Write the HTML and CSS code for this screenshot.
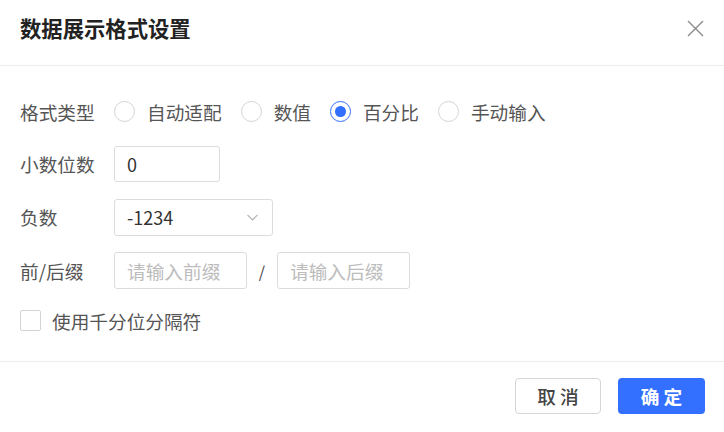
FILE: index.html
```html
<!DOCTYPE html>
<html lang="zh">
<head>
<meta charset="utf-8">
<title>数据展示格式设置</title>
<link rel="stylesheet" href="styles.css">
</head>
<body>
<div class="dialog">
  <div class="header">
    <div class="title">数据展示格式设置</div>
    <button class="close" aria-label="关闭">
      <svg width="17" height="17" viewBox="0 0 17 17"><path d="M1 1L16 16M16 1L1 16" stroke="#8a8a8a" stroke-width="1.4" fill="none"/></svg>
    </button>
  </div>
  <div class="body">
    <div class="row row-1">
      <div class="label">格式类型</div>
      <div class="radios">
        <label class="radio"><span class="circle"></span><span class="rtext">自动适配</span></label>
        <label class="radio"><span class="circle"></span><span class="rtext">数值</span></label>
        <label class="radio checked"><span class="circle"></span><span class="rtext">百分比</span></label>
        <label class="radio"><span class="circle"></span><span class="rtext">手动输入</span></label>
      </div>
    </div>
    <div class="row">
      <div class="label">小数位数</div>
      <div class="input input-small">0</div>
    </div>
    <div class="row">
      <div class="label">负数</div>
      <div class="input select">
        <span>-1234</span>
        <svg width="11" height="7" viewBox="0 0 11 7"><path d="M0.5 0.8L5.5 6L10.5 0.8" stroke="#b0b0b0" stroke-width="1.1" fill="none"/></svg>
      </div>
    </div>
    <div class="row row-affix">
      <div class="label">前/后缀</div>
      <div class="input input-affix placeholder">请输入前缀</div>
      <span class="slash">/</span>
      <div class="input input-affix placeholder">请输入后缀</div>
    </div>
    <div class="row row-check">
      <span class="checkbox"></span>
      <span class="ctext">使用千分位分隔符</span>
    </div>
  </div>
  <div class="footer">
    <button class="btn btn-cancel">取 消</button>
    <button class="btn btn-primary">确 定</button>
  </div>
</div>
</body>
</html>
```

FILE: styles.css
```css
* { box-sizing: border-box; }
html, body { margin: 0; padding: 0; background: #fff; }
body {
  font-family: "Noto Sans CJK SC", "Noto Sans", sans-serif;
  font-size: 18.67px;
  color: #555;
}
.dialog { width: 724px; height: 432px; display: flex; flex-direction: column; }
.header {
  height: 66px;
  border-bottom: 1px solid #ececec;
  display: flex;
  justify-content: space-between;
  align-items: flex-start;
  padding: 0 20px;
}
.title {
  margin-top: 14px;
  font-size: 21.33px;
  line-height: 28px;
  font-weight: 700;
  color: #222;
}
.close {
  margin-top: 20px;
  padding: 0;
  border: 0;
  background: none;
  width: 17px;
  height: 17px;
  display: block;
}
.close svg { display: block; }
.body {
  height: 295px;
  padding: 28px 20px 0;
  display: flex;
  flex-direction: column;
  gap: 17px;
}
.row { display: flex; align-items: center; height: 36px; }
.row-1 { height: 35px; }
.row-affix { height: 37px; }
.row-check { height: 31px; margin-top: -1px; }
.label { width: 94px; flex: none; line-height: 24px; }
.radios { display: flex; align-items: center; }
.radio { display: flex; align-items: center; margin-right: 19px; line-height: 24px; }
.circle {
  width: 21px; height: 21px;
  border: 1px solid #d4d4d4;
  border-radius: 50%;
  margin-right: 12px;
  position: relative;
}
.checked .circle { border: 1.5px solid #3370ff; }
.checked .circle::after {
  content: "";
  position: absolute;
  left: 50%; top: 50%;
  width: 10.5px; height: 10.5px;
  margin: -5.25px 0 0 -5.25px;
  border-radius: 50%;
  background: #3370ff;
}
.input {
  height: 36px;
  border: 1px solid #dcdcdc;
  border-radius: 3px;
  padding: 0 12px;
  display: flex;
  align-items: center;
  color: #333;
  font-size: 18px;
}
.input-small { width: 106px; }
.select { width: 159px; height: 37px; justify-content: space-between; padding-right: 14px; }
.select svg { display: block; }
.input-affix { width: 133px; height: 37px; }
.placeholder { color: #bcbcbc; font-size: 18.67px; }
.slash { width: 30px; text-align: center; color: #444; font-size: 16px; }
.checkbox {
  width: 21px; height: 21px;
  border: 1px solid #d4d4d4;
  border-radius: 2px;
  margin-right: 11px;
}
.ctext { line-height: 24px; }
.footer {
  border-top: 1px solid #ececec;
  display: flex;
  justify-content: flex-end;
  align-items: flex-start;
  padding: 16px 19px 0;
  gap: 17px;
  flex: 1;
}
.btn {
  height: 36px;
  border-radius: 4px;
  font-family: inherit;
  font-size: 18.67px;
  padding: 0;
  line-height: 24px;
}
.btn-cancel {
  width: 86px;
  border: 1px solid #d6d6d6;
  background: #fff;
  color: #444;
  font-weight: 500;
}
.btn-primary {
  width: 87px;
  border: 0;
  background: #3370ff;
  color: #fff;
  font-weight: 700;
}
```
